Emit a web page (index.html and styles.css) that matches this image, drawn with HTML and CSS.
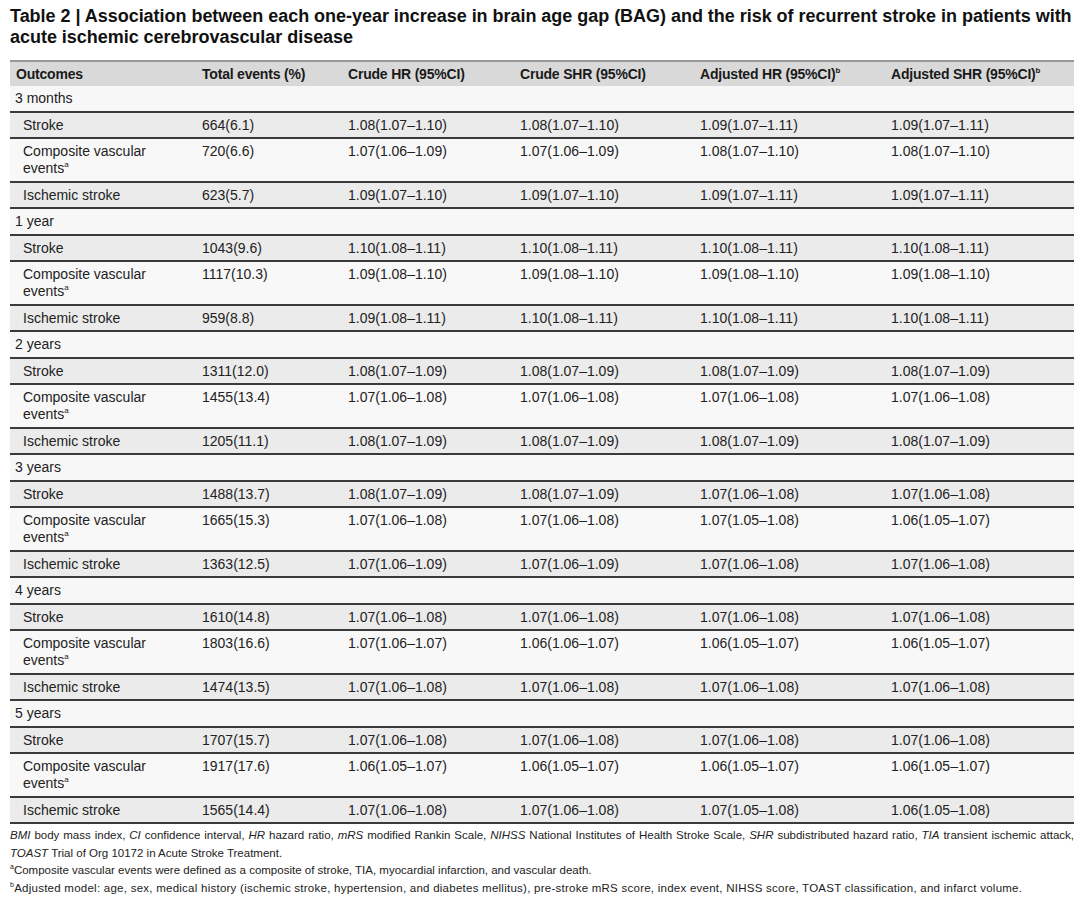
FILE: index.html
```html
<!DOCTYPE html>
<html>
<head>
<meta charset="utf-8">
<link rel="stylesheet" href="styles.css">
</head>
<body>
<div class="page">
  <h1 class="title">Table 2 | Association between each one-year increase in brain age gap (BAG) and the risk of recurrent stroke in patients with acute ischemic cerebrovascular disease</h1>
  <table class="tbl">
    <colgroup>
      <col class="c1"><col class="c2"><col class="c3"><col class="c4"><col class="c5"><col class="c6">
    </colgroup>
    <thead>
      <tr class="head">
        <th>Outcomes</th><th>Total events (%)</th><th>Crude HR (95%CI)</th><th>Crude SHR (95%CI)</th><th>Adjusted HR (95%CI)<sup>b</sup></th><th>Adjusted SHR (95%CI)<sup>b</sup></th>
      </tr>
    </thead>
    <tbody>
      <tr class="group"><td colspan="6">3 months</td></tr>
      <tr class="row dark"><td>Stroke</td><td>664(6.1)</td><td>1.08(1.07–1.10)</td><td>1.08(1.07–1.10)</td><td>1.09(1.07–1.11)</td><td>1.09(1.07–1.11)</td></tr>
      <tr class="row light two"><td>Composite vascular<br>events<sup>a</sup></td><td>720(6.6)</td><td>1.07(1.06–1.09)</td><td>1.07(1.06–1.09)</td><td>1.08(1.07–1.10)</td><td>1.08(1.07–1.10)</td></tr>
      <tr class="row dark"><td>Ischemic stroke</td><td>623(5.7)</td><td>1.09(1.07–1.10)</td><td>1.09(1.07–1.10)</td><td>1.09(1.07–1.11)</td><td>1.09(1.07–1.11)</td></tr>

      <tr class="group"><td colspan="6">1 year</td></tr>
      <tr class="row dark"><td>Stroke</td><td>1043(9.6)</td><td>1.10(1.08–1.11)</td><td>1.10(1.08–1.11)</td><td>1.10(1.08–1.11)</td><td>1.10(1.08–1.11)</td></tr>
      <tr class="row light two"><td>Composite vascular<br>events<sup>a</sup></td><td>1117(10.3)</td><td>1.09(1.08–1.10)</td><td>1.09(1.08–1.10)</td><td>1.09(1.08–1.10)</td><td>1.09(1.08–1.10)</td></tr>
      <tr class="row dark"><td>Ischemic stroke</td><td>959(8.8)</td><td>1.09(1.08–1.11)</td><td>1.10(1.08–1.11)</td><td>1.10(1.08–1.11)</td><td>1.10(1.08–1.11)</td></tr>

      <tr class="group"><td colspan="6">2 years</td></tr>
      <tr class="row dark"><td>Stroke</td><td>1311(12.0)</td><td>1.08(1.07–1.09)</td><td>1.08(1.07–1.09)</td><td>1.08(1.07–1.09)</td><td>1.08(1.07–1.09)</td></tr>
      <tr class="row light two"><td>Composite vascular<br>events<sup>a</sup></td><td>1455(13.4)</td><td>1.07(1.06–1.08)</td><td>1.07(1.06–1.08)</td><td>1.07(1.06–1.08)</td><td>1.07(1.06–1.08)</td></tr>
      <tr class="row dark"><td>Ischemic stroke</td><td>1205(11.1)</td><td>1.08(1.07–1.09)</td><td>1.08(1.07–1.09)</td><td>1.08(1.07–1.09)</td><td>1.08(1.07–1.09)</td></tr>

      <tr class="group"><td colspan="6">3 years</td></tr>
      <tr class="row dark"><td>Stroke</td><td>1488(13.7)</td><td>1.08(1.07–1.09)</td><td>1.08(1.07–1.09)</td><td>1.07(1.06–1.08)</td><td>1.07(1.06–1.08)</td></tr>
      <tr class="row light two"><td>Composite vascular<br>events<sup>a</sup></td><td>1665(15.3)</td><td>1.07(1.06–1.08)</td><td>1.07(1.06–1.08)</td><td>1.07(1.05–1.08)</td><td>1.06(1.05–1.07)</td></tr>
      <tr class="row dark"><td>Ischemic stroke</td><td>1363(12.5)</td><td>1.07(1.06–1.09)</td><td>1.07(1.06–1.09)</td><td>1.07(1.06–1.08)</td><td>1.07(1.06–1.08)</td></tr>

      <tr class="group"><td colspan="6">4 years</td></tr>
      <tr class="row dark"><td>Stroke</td><td>1610(14.8)</td><td>1.07(1.06–1.08)</td><td>1.07(1.06–1.08)</td><td>1.07(1.06–1.08)</td><td>1.07(1.06–1.08)</td></tr>
      <tr class="row light two"><td>Composite vascular<br>events<sup>a</sup></td><td>1803(16.6)</td><td>1.07(1.06–1.07)</td><td>1.06(1.06–1.07)</td><td>1.06(1.05–1.07)</td><td>1.06(1.05–1.07)</td></tr>
      <tr class="row dark"><td>Ischemic stroke</td><td>1474(13.5)</td><td>1.07(1.06–1.08)</td><td>1.07(1.06–1.08)</td><td>1.07(1.06–1.08)</td><td>1.07(1.06–1.08)</td></tr>

      <tr class="group"><td colspan="6">5 years</td></tr>
      <tr class="row dark"><td>Stroke</td><td>1707(15.7)</td><td>1.07(1.06–1.08)</td><td>1.07(1.06–1.08)</td><td>1.07(1.06–1.08)</td><td>1.07(1.06–1.08)</td></tr>
      <tr class="row light two"><td>Composite vascular<br>events<sup>a</sup></td><td>1917(17.6)</td><td>1.06(1.05–1.07)</td><td>1.06(1.05–1.07)</td><td>1.06(1.05–1.07)</td><td>1.06(1.05–1.07)</td></tr>
      <tr class="row dark"><td>Ischemic stroke</td><td>1565(14.4)</td><td>1.07(1.06–1.08)</td><td>1.07(1.06–1.08)</td><td>1.07(1.05–1.08)</td><td>1.06(1.05–1.08)</td></tr>
    </tbody>
  </table>
  <div class="notes">
    <p class="abbr"><i>BMI</i> body mass index, <i>CI</i> confidence interval, <i>HR</i> hazard ratio, <i>mRS</i> modified Rankin Scale, <i>NIHSS</i> National Institutes of Health Stroke Scale, <i>SHR</i> subdistributed hazard ratio, <i>TIA</i> transient ischemic attack, <i>TOAST</i> Trial of Org 10172 in Acute Stroke Treatment.</p>
    <p><sup>a</sup>Composite vascular events were defined as a composite of stroke, TIA, myocardial infarction, and vascular death.</p>
    <p class="wide"><sup>b</sup>Adjusted model: age, sex, medical history (ischemic stroke, hypertension, and diabetes mellitus), pre-stroke mRS score, index event, NIHSS score, TOAST classification, and infarct volume.</p>
  </div>
</div>
</body>
</html>
```

FILE: styles.css
```css
html, body {
  margin: 0;
  padding: 0;
  background: #ffffff;
}
body {
  font-family: "Liberation Sans", Arial, sans-serif;
  color: #222;
}
.page {
  padding: 6px 2px 0 10px;
}
.title {
  margin: 0;
  font-size: 18px;
  line-height: 21px;
  font-weight: bold;
  color: #111;
  letter-spacing: -0.03px;
}
.tbl {
  margin-top: 12px;
  width: 1064px;
  border-collapse: collapse;
  table-layout: fixed;
  font-size: 14px;
  line-height: 17px;
}
.c1 { width: 186px; }
.c2 { width: 146px; }
.c3 { width: 172px; }
.c4 { width: 180px; }
.c5 { width: 191px; }
.c6 { width: 189px; }
.tbl th, .tbl td {
  text-align: left;
  vertical-align: top;
  padding: 4px 6px 3px 6px;
  white-space: nowrap;
}
.head th {
  background: #d9d9d9;
  border-top: 2px solid #9a9a9a;
  font-weight: bold;
  color: #1a1a1a;
  letter-spacing: -0.2px;
}
.group td {
  background: #f7f7f7;
  padding: 4px 5px 4px 5px;
  border-bottom: 2px solid #3a3a3a;
}
.row td {
  border-bottom: 2px solid #3a3a3a;
}
.row td:first-child {
  padding-left: 13px;
}
.dark td { background: #ebebeb; }
.light td { background: #f8f8f8; }
.two td { padding-bottom: 4px; }
sup {
  font-size: 8px;
  line-height: 0;
  vertical-align: 6px;
}
.notes {
  margin-top: 3px;
  width: 1064px;
  font-size: 11.5px;
  line-height: 17.5px;
  color: #222;
}
.notes p {
  margin: 0;
}
.notes sup {
  font-size: 7px;
  vertical-align: 5px;
}
.abbr {
  text-align: justify;
}
.wide {
  letter-spacing: 0.25px;
}
```
